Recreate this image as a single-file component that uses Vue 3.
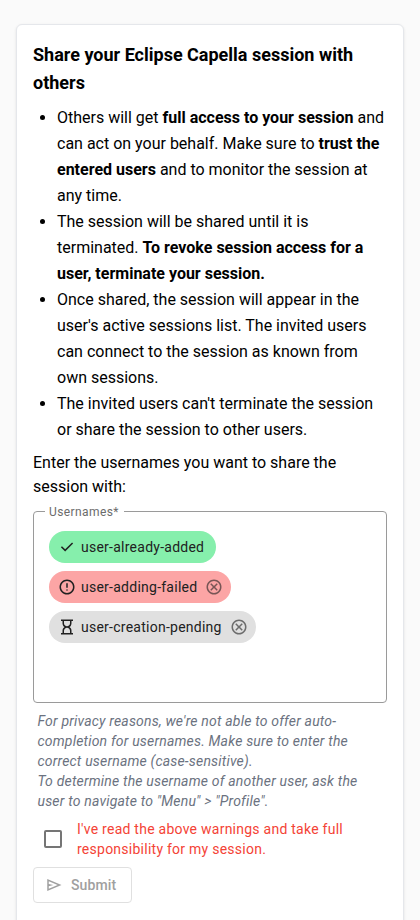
<script setup>
const warnings = [
  [
    { text: 'Others will get ' },
    { text: 'full access to your session', bold: true },
    { text: ' and can act on your behalf. Make sure to ' },
    { text: 'trust the entered users', bold: true },
    { text: ' and to monitor the session at any time.' },
  ],
  [
    { text: 'The session will be shared until it is terminated. ' },
    { text: 'To revoke session access for a user, terminate your session.', bold: true },
  ],
  [
    {
      text: "Once shared, the session will appear in the user's active sessions list. The invited users can connect to the session as known from own sessions.",
    },
  ],
  [{ text: "The invited users can't terminate the session or share the session to other users." }],
]

const icons = {
  check: 'M382-240 154-468l57-57 171 171 367-367 57 57-424 424Z',
  error:
    'M480-280q17 0 28.5-11.5T520-320q0-17-11.5-28.5T480-360q-17 0-28.5 11.5T440-320q0 17 11.5 28.5T480-280Zm-40-160h80v-240h-80v240Zm40 360q-83 0-156-31.500T197-197q-54-54-85.500-127T80-480q0-83 31.500-156T197-763q54-54 127-85.500T480-880q83 0 156 31.500T763-763q54 54 85.500 127T880-480q0 83-31.500 156T763-197q-54 54-127 85.500T480-80Zm0-80q134 0 227-93t93-227q0-134-93-227t-227-93q-134 0-227 93t-93 227q0 134 93 227t227 93Z',
  hourglass:
    'M320-160h320v-120q0-66-47-113t-113-47q-66 0-113 47t-47 113v120Zm160-360q66 0 113-47t47-113v-120H320v120q0 66 47 113t113 47ZM160-80v-80h80v-120q0-61 28.500-114.500T348-480q-51-32-79.500-85.500T240-680v-120h-80v-80h640v80h-80v120q0 61-28.500 114.500T612-480q51 32 79.500 85.500T720-280v120h80v80H160Z',
  cancel:
    'm336-280 144-144 144 144 56-56-144-144 144-144-56-56-144 144-144-144-56 56 144 144-144 144 56 56ZM480-80q-83 0-156-31.500T197-197q-54-54-85.500-127T80-480q0-83 31.500-156T197-763q54-54 127-85.500T480-880q83 0 156 31.500T763-763q54 54 85.500 127T880-480q0 83-31.500 156T763-197q-54 54-127 85.500T480-80Zm0-80q134 0 227-93t93-227q0-134-93-227t-227-93q-134 0-227 93t-93 227q0 134 93 227t227 93Z',
  send: 'M120-160v-640l760 320-760 320Zm80-120 474-200-474-200v140l240 60-240 60v140Z',
}

const users = [
  { name: 'user-already-added', icon: 'check', state: 'added', removable: false },
  { name: 'user-adding-failed', icon: 'error', state: 'failed', removable: true },
  { name: 'user-creation-pending', icon: 'hourglass', state: 'pending', removable: true },
]
</script>

<template>
  <main class="page">
    <section class="card">
      <h2 class="title">Share your Eclipse Capella session with others</h2>
      <ul class="warnings">
        <li v-for="(item, i) in warnings" :key="i"><span v-for="(part, j) in item" :key="j" :class="{ bold: part.bold }">{{ part.text }}</span></li>
      </ul>
      <p class="prompt">Enter the usernames you want to share the session with:</p>
      <fieldset class="field">
        <legend class="legend">Usernames*</legend>
        <div class="chips">
          <div v-for="user in users" :key="user.name" class="chip" :class="user.state">
            <svg class="icon" viewBox="0 -960 960 960"><path :d="icons[user.icon]" /></svg>
            <span class="name">{{ user.name }}</span>
            <svg v-if="user.removable" class="icon remove" viewBox="0 -960 960 960"><path :d="icons.cancel" /></svg>
          </div>
        </div>
      </fieldset>
      <p class="hint">
        For privacy reasons, we're not able to offer auto-completion for usernames. Make sure to enter the correct
        username (case-sensitive).<br />
        To determine the username of another user, ask the user to navigate to "Menu" &gt; "Profile".
      </p>
      <label class="consent">
        <span class="box"></span>
        <span>I've read the above warnings and take full responsibility for my session.</span>
      </label>
      <button class="submit" disabled>
        <svg class="icon" viewBox="0 -960 960 960"><path :d="icons.send" /></svg>
        <span>Submit</span>
      </button>
    </section>
  </main>
</template>

<style>
body {
  background: #fafafa;
}
</style>

<style scoped>
.page {
  box-sizing: border-box;
  height: 920px;
  overflow: hidden;
  padding: 24px 16px 0;
  background: #fafafa;
  color: #000;
  font-family: Roboto, 'Liberation Sans', sans-serif;
  font-size: 16px;
  line-height: 24px;
}
.card {
  box-sizing: border-box;
  height: 920px;
  padding: 16px;
  background: #fff;
  border: 1px solid #e5e7eb;
  border-radius: 6px;
  box-shadow: 0 1px 3px rgba(0, 0, 0, 0.1);
}
.title {
  margin: 0;
  font-size: 18px;
  line-height: 28px;
  font-weight: 700;
}
.warnings {
  margin: 8px 0;
  padding-left: 24px;
  line-height: 26px;
  list-style: disc;
}
.bold {
  font-weight: 700;
}
.prompt {
  margin: 0;
}
.field {
  box-sizing: border-box;
  height: 200px;
  min-width: 0;
  margin: 4px 0 0;
  padding: 0 15px;
  border: 1px solid #9a9a9a;
  border-radius: 4px;
}
.legend {
  margin-left: -4px;
  padding: 1px 5px 0 4px;
  height: 16px;
  box-sizing: border-box;
  color: #6b6b6b;
  font-size: 12px;
  line-height: 16px;
  letter-spacing: 0.4px;
}
.chips {
  display: flex;
  flex-direction: column;
  align-items: flex-start;
  gap: 8px;
  padding-top: 12px;
}
.chip {
  display: flex;
  align-items: center;
  height: 32px;
  padding: 0 12px 0 9px;
  box-sizing: border-box;
  border-radius: 16px;
  color: #212121;
  font-size: 14px;
  line-height: 20px;
}
.added {
  background: #86efac;
}
.failed {
  background: #fca5a5;
}
.pending {
  background: #e0e0e0;
}
.icon {
  flex: none;
  width: 18px;
  height: 18px;
  fill: currentColor;
}
.name {
  margin-left: 5px;
  letter-spacing: 0.25px;
}
.remove {
  margin: 0 -4px 0 8px;
  opacity: 0.6;
}
.hint {
  margin: 8px 0 0;
  padding: 0 4px 0 4.5px;
  color: #6b7280;
  font-size: 14px;
  line-height: 20px;
  letter-spacing: 0.19px;
  font-style: italic;
}
.consent {
  display: flex;
  align-items: center;
  gap: 15px;
  margin-top: 8px;
  padding-left: 11px;
  color: #f44336;
  font-size: 14px;
  line-height: 20px;
  letter-spacing: 0.25px;
}
.box {
  flex: none;
  box-sizing: border-box;
  width: 18px;
  height: 18px;
  border: 2px solid #757575;
  border-radius: 2px;
}
.submit {
  display: flex;
  align-items: center;
  gap: 8px;
  box-sizing: border-box;
  height: 36px;
  margin: 8px 0 0;
  padding: 0 15px 0 11px;
  border: 1px solid #e0e0e0;
  border-radius: 4px;
  background: #fff;
  color: #a0a0a0;
  font-family: inherit;
  font-size: 14px;
  font-weight: 500;
  letter-spacing: 0.1px;
}
</style>
